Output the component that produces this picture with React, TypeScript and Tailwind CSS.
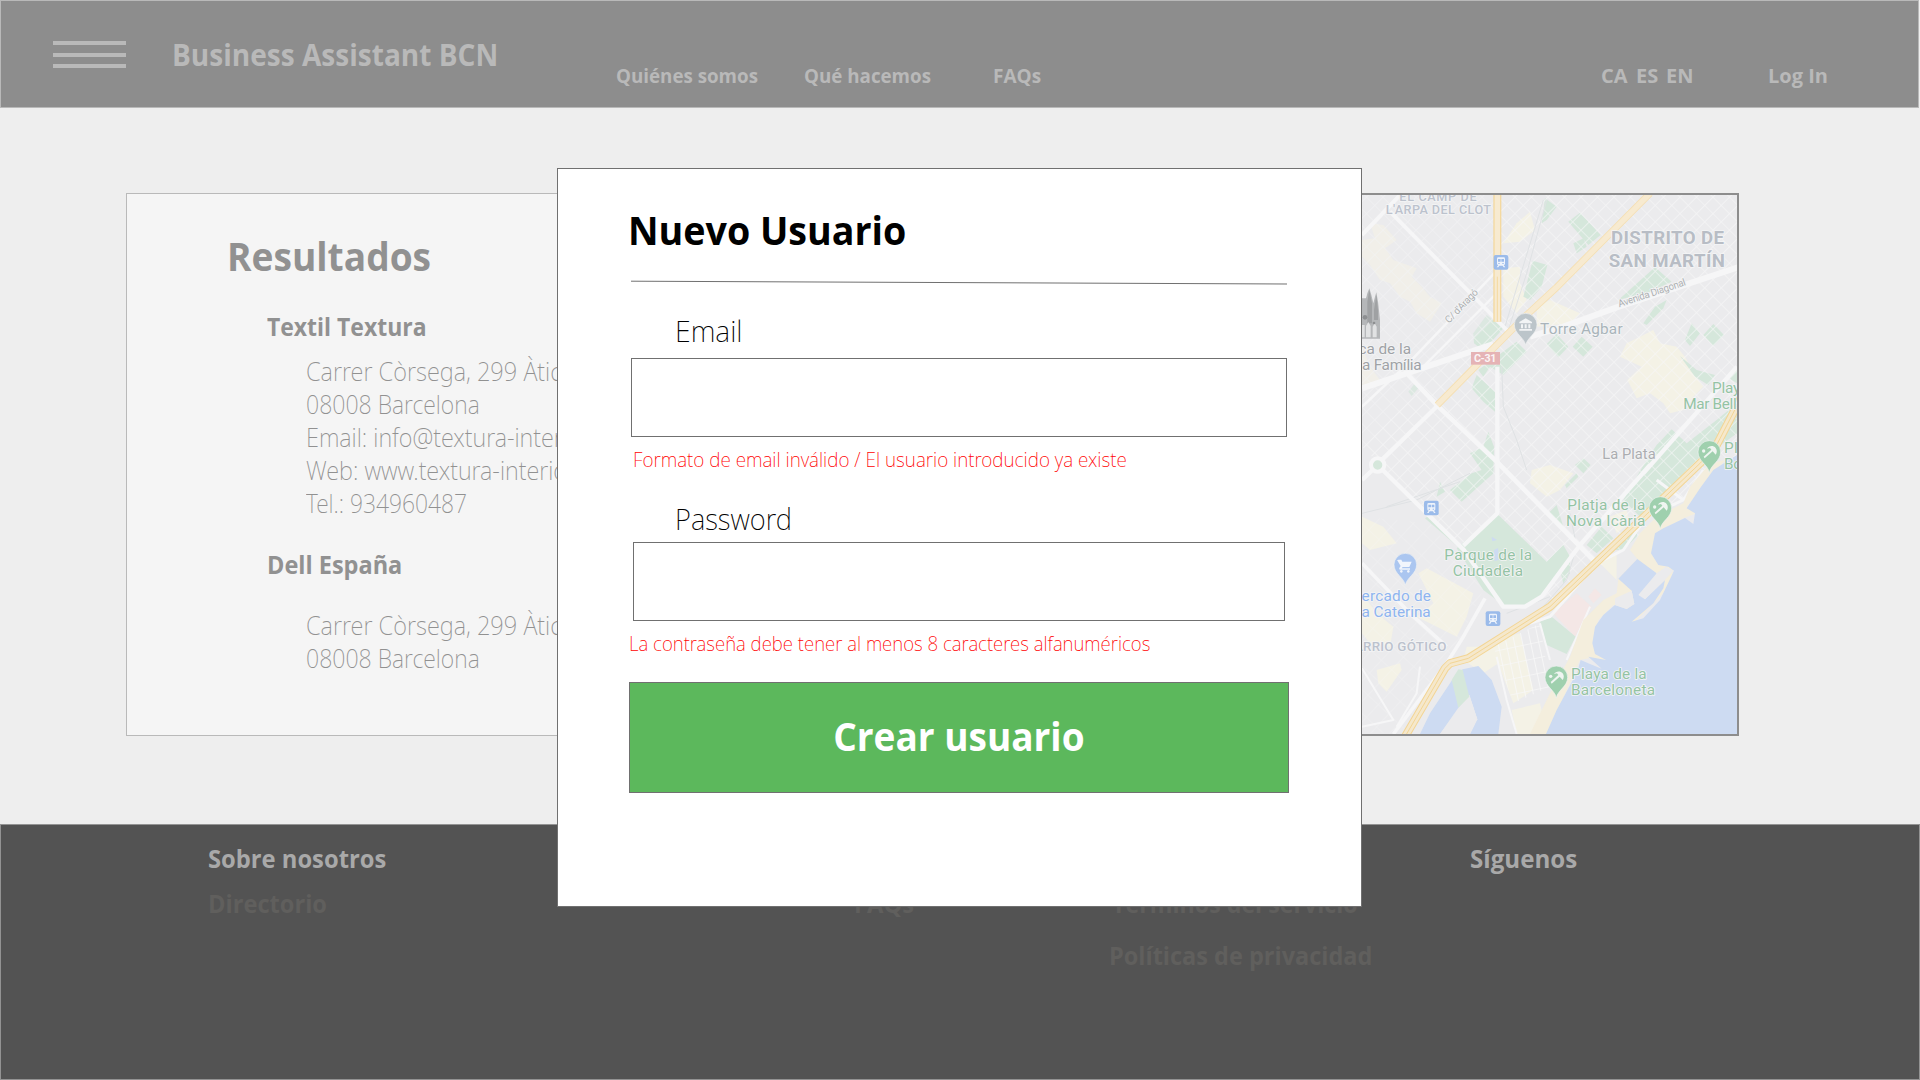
import type { ReactNode } from "react";

const bold = "font-['Open_Sans',sans-serif] font-bold whitespace-nowrap";
const light = "font-['Noto_Sans',sans-serif] font-extralight whitespace-nowrap";

function Header() {
  return (
    <header className={`${bold} flex h-[108px] w-[1919px] items-start border border-[#b9b9b9] bg-[#8d8d8d] text-xl leading-7 text-[#b9b9b9]`}>
      <button className="mt-10 ml-[52px] flex w-[73px] flex-col gap-[7.5px]" aria-label="Menú">
        <span className="h-1 w-full bg-[#b9b9b9]" />
        <span className="h-1 w-full bg-[#b9b9b9]" />
        <span className="h-1 w-full bg-[#b9b9b9]" />
      </button>
      <h1 className="mt-[34px] ml-[46px] w-[444px] origin-left scale-x-[0.935] text-[30px] leading-10">Business Assistant BCN</h1>
      <nav className="mt-[61px] flex flex-1">
        <a className="w-[188px] origin-left scale-x-[0.938]">Quiénes somos</a>
        <a className="w-[189px] origin-left scale-x-[0.938]">Qué hacemos</a>
        <a className="origin-left scale-x-95">FAQs</a>
      </nav>
      <div className="mt-[61px] flex w-[317px]">
        <a className="w-[35px]">CA</a>
        <a className="w-[30px]">ES</a>
        <a className="w-[102px]">EN</a>
        <a>Log In</a>
      </div>
    </header>
  );
}

function Results() {
  return (
    <section className="h-[543px] w-[874px] border border-[#b9b9b9] bg-[#f5f5f5] pt-[34px] pl-[100px] text-[25px] leading-[33px] text-[#919191]">
      <h2 className={`${bold} origin-left scale-x-[0.928] text-[40px] leading-14`}>Resultados</h2>
      <h3 className={`${bold} mt-[26px] ml-10 origin-left scale-x-[0.918]`}>Textil Textura</h3>
      <address className={`${light} mt-3 ml-[79px] not-italic`}>
        <p className="origin-left scale-x-[0.945]">Carrer Còrsega, 299 Àtico</p>
        <p className="origin-left scale-x-[0.922]">08008 Barcelona</p>
        <p className="origin-left scale-x-[0.94]">Email: info@textura-interiors.com</p>
        <p className="origin-left scale-x-[0.94]">Web: www.textura-interiors.com</p>
        <p className="origin-left scale-x-[0.913]">Tel.: 934960487</p>
      </address>
      <h3 className={`${bold} mt-7 ml-10 origin-left scale-x-94`}>Dell España</h3>
      <address className={`${light} mt-7 ml-[79px] not-italic`}>
        <p className="origin-left scale-x-[0.945]">Carrer Còrsega, 299 Àtico</p>
        <p className="origin-left scale-x-[0.922]">08008 Barcelona</p>
      </address>
    </section>
  );
}

function Pin({ x, y, color, children }: { x: number; y: number; color: string; children: ReactNode }) {
  return (
    <g transform={`translate(${x} ${y})`}>
      <path d="M0 62C-4 38-34 28-34 0a34 34 0 0 1 68 0C34 28 4 38 0 62Z" fill={color} stroke="#f0f1f2" strokeWidth="2" />
      {children}
    </g>
  );
}

function Beach({ x, y }: { x: number; y: number }) {
  return (
    <Pin x={x} y={y} color="#9fd0ae">
      <path d="M-7-10C-2-19 12-21 19-12C24-6 23 3 19 8L10-2L-14 19L-17 14L6-7L2-12Z" fill="#eff5f1" />
      <circle cx="-17" cy="-3" r="5" fill="#eff5f1" />
    </Pin>
  );
}

function Station({ x, y }: { x: number; y: number }) {
  return (
    <g transform={`translate(${x} ${y})`}>
      <rect x="-22" y="-22" width="44" height="44" rx="6" fill="#9bbbea" />
      <path d="M-12-11q0-4 4-4H8q4 0 4 4V4q0 4-4 4l5 7H8L5 10H-5l-3 5h-5l5-7q-4 0-4-4Z" fill="#eef3fb" />
      <path d="M-9-10h8v8h-8zM1-10h8v8H1zM-8 2h4v3h-4zM4 2h4v3H4z" fill="#9bbbea" />
    </g>
  );
}

function Label({ x, y, w, size = 46, color = "#9fa2a6", weight = 400, children }: { x: number; y: number; w: number; size?: number; color?: string; weight?: number; children: string }) {
  return (
    <text x={x} y={y} textLength={w} fontSize={size} fontWeight={weight} fill={color} stroke="#f4f5f6" strokeWidth="5" strokeLinejoin="round" paintOrder="stroke">
      {children}
    </text>
  );
}

const green = "#d5e7db";
const cream = "#f4f2e6";
const coastRoad = "M1175 650L1100 795L1050 850L600 1280L355 1435L300 1450L285 1465L165 1670";

function CityMap() {
  return (
    <section className="flex h-[543px] w-[739px] justify-end overflow-hidden border-2 border-[#8d8d8d] bg-[#ebebed]">
      <svg width="387" height="539" viewBox="0 45 1161 1617" className="shrink-0 font-[Roboto,sans-serif]">
        <defs>
          <pattern id="blocks" width="35" height="35" patternUnits="userSpaceOnUse" patternTransform="rotate(45)">
            <path d="M0 0H35M0 0V35" stroke="#f7f7f8" strokeWidth="5" />
          </pattern>
          <pattern id="wideBlocks" width="42" height="52" patternUnits="userSpaceOnUse" patternTransform="rotate(43)">
            <path d="M0 0H42M0 0V52" stroke="#f7f7f8" strokeWidth="5" />
          </pattern>
          <pattern id="lanes" width="24" height="46" patternUnits="userSpaceOnUse" patternTransform="rotate(-12)">
            <path d="M0 0H24M0 0V46" stroke="#f8f8f8" strokeWidth="5" />
          </pattern>
        </defs>
        <rect y="45" width="1161" height="1617" fill="#ebebed" />

        <g fill={cream}>
          <path d="M60 130L100 135L140 180L105 205L130 240L200 265L185 290L215 320L240 350L275 370L240 425L200 400L180 365L150 350L120 310L90 300L60 255L36 230V180L75 175Z" />
          <path d="M36 500L60 560L90 600L36 620Z" />
          <path d="M540 95L555 150L510 185L460 190L500 130Z" />
          <path d="M460 265L510 260L510 310L530 360L500 400L460 350Z" />
          <path d="M560 380L600 360L690 400L660 430L560 440Z" />
          <path d="M870 470L910 450L930 490L980 500L1005 530L1030 580L1060 620L1030 650L1000 690L960 700L940 670L900 640L860 655L832 600L875 560L810 530L830 490Z" />
          <path d="M545 870L600 855L670 880L630 930L590 950L540 910Z" />
          <path d="M36 1010L100 1040L140 1090L60 1110L36 1090Z" />
          <path d="M230 1165L370 1240L350 1310L320 1370L200 1310L250 1270L205 1180Z" />
          <path d="M36 1240L80 1300L130 1340L120 1400L60 1390L36 1360ZM80 1470L150 1450L155 1470L110 1535L85 1510Z" />
          <path d="M435 1380L510 1360L550 1530L490 1570L440 1440Z" />
          <path d="M485 1590L570 1570L590 1662H500Z" />
          <path d="M350 1400L440 1400L460 1440L400 1480L340 1440Z" />
          <path d="M780 1010L830 990L840 1030L800 1060ZM740 1140L800 1120L800 1200Z" />
        </g>
        <path d="M610 1300L680 1240L725 1280L675 1370ZM715 1250L735 1225L755 1245L730 1270Z" fill="#f4e7e6" />

        <g fill={green}>
          <path d="M585 55L620 80L590 120L575 130Z" />
          <path d="M655 125L690 98L752 165L715 195Z" />
          <path d="M670 190L700 175L710 200L680 220Z" />
          <path d="M548 242L592 255L575 320L540 360L520 350Z" />
          <path d="M805 360L915 262L965 305L900 335Z" />
          <path d="M880 430L915 380L950 360L940 385L905 420L890 435Z" />
          <path d="M370 460L410 405L460 445L400 512L372 490Z" />
          <path d="M385 570L500 485L530 515L460 585L420 560L400 590Z" />
          <path d="M590 492L620 462L655 500L625 532Z" />
          <path d="M668 500L695 470L728 500L700 530Z" />
          <path d="M1005 480L1025 430L1050 460L1020 498ZM1060 465L1090 432L1122 465L1090 498Z" />
          <path d="M990 528L1040 570L1095 585L1075 615L1035 590ZM1130 590L1161 570V610Z" />
          <path d="M365 625L380 585L435 635V695L400 665Z" />
          <path d="M175 635L195 610L205 625L185 648Z" />
          <path d="M360 820L400 800L415 755L432 800L430 880L335 965L300 930L365 880L395 870Z" />
          <path d="M260 950L270 905L285 935ZM645 915L680 880L685 890L650 925ZM675 855L700 835L722 855L700 880Z" />
          <path d="M890 840L920 795L965 748L1010 790L1100 720L1161 670V760L1010 870L930 960L870 1010L820 960L860 890Z" />
          <path d="M225 1015L240 1005L345 1105L335 1110Z" />
          <path d="M595 1000L620 975L640 1040L620 1035ZM710 1095L755 1040L790 1075L740 1120ZM630 1170L660 1130V1180L640 1210Z" />
          <path d="M790 1110L870 1020L860 1070L820 1110Z" />
          <path d="M570 1325L605 1310L677 1370L650 1422L590 1395Z" />
        </g>

        <path d="M0 40H1161V830L600 1280L440 1000L340 1100L36 800Z" fill="url(#blocks)" opacity=".75" />
        <path d="M0 45H430V420L36 800Z" fill="#ebebed" opacity=".35" />
        <path d="M440 1000L590 1145L640 1095L660 1130L630 1185L570 1250L525 1275H460L400 1230L320 1105Z" fill={green} />
        <path d="M36 1010L240 1030L400 1230L300 1440L150 1660H0Z" fill="url(#wideBlocks)" opacity=".3" />
        <path d="M430 1400L570 1330L600 1520L490 1570Z" fill="url(#lanes)" />
        <path d="M425 1070l16 10-14 4zM432 1110l12-6 2 35-12 5z" fill="#cddbf2" />

        <g fill="none" stroke="#dfe2e4" strokeWidth="3">
          <path d="M590 60L530 280L475 450M580 60L510 290L465 440M36 1000L200 960L360 880M110 980L330 905" />
          <path d="M455 560L460 680L500 780L530 870M660 1000L680 1100L650 1200L580 1280M470 1300L600 1250" />
        </g>

        <g fill="none" stroke="#f6f6f7" strokeLinejoin="round">
          <path d="M150 45L36 165M120 95L480 460" strokeWidth="12" />
          <path d="M450 262L180 545L36 680M440 340L220 560" strokeWidth="8" />
          <path d="M1175 258L800 382L640 440L540 470M430 492L230 560L36 625" strokeWidth="18" />
          <path d="M175 585L265 680L440 845L730 1140" strokeWidth="14" />
          <path d="M265 675L90 845" strokeWidth="13" />
          <path d="M442 560V1000L340 1097" strokeWidth="13" />
          <path d="M36 900L83 855L340 1108L460 1280H525L575 1250L690 1095L900 855M880 880L1161 560" strokeWidth="13" />
          <path d="M36 1150L180 1300L290 1400M405 1255L340 1370L290 1450L130 1662" strokeWidth="11" />
          <path d="M440 1430L470 1560L500 1662M570 1330L600 1440M720 1280L650 1440M36 1465L130 1620L36 1640M140 1640L200 1540L210 1460" strokeWidth="6" />
          <path d="M1060 870L1000 960L890 1010L820 1110L740 1150L600 1310L540 1330M1000 960L920 900" strokeWidth="9" />
        </g>
        <circle cx="83" cy="855" r="20" fill={green} stroke="#f6f6f7" strokeWidth="12" />

        <path d="M1125 840L1060 920L1010 980L1040 1000L1000 1015L950 1045L925 1060L905 1120L970 1170L955 1225L850 1330L840 1325L930 1220L920 1180L855 1245L850 1275L830 1287L790 1275L745 1320L730 1390L770 1440L715 1435L690 1440L620 1600L590 1662H540L600 1540L660 1430L700 1320L760 1260L800 1240L805 1196L862 1137L840 1110L870 1060L920 1010L1000 970L1020 920L1080 850Z" fill="#f4eedd" />
        <path d="M1161 825V1662H588L620 1590L682 1475L692 1440L720 1452L755 1466L715 1430L768 1440L735 1422L727 1390L735 1340L760 1305L795 1275L830 1287L853 1272L845 1232L805 1196L862 1137L920 1180L865 1245L885 1258L945 1200L940 1225L910 1270L845 1325L880 1315L930 1260L972 1172L955 1160L925 1155L903 1120L915 1060L940 1045L1005 1014L1030 1032L1035 1000L1010 985L1050 925L1090 870Z" fill="#cddbf2" />
        <path d="M795 1255L845 1232L853 1272L830 1287L795 1275ZM920 1180L948 1160L970 1172L945 1200L885 1258L868 1243L905 1205Z" fill="#ebebed" />
        <path d="M338 1468L385 1458L425 1500L455 1580L445 1662H360L382 1618L358 1545L325 1590L270 1662H210L240 1600L320 1480Z" fill="#cddbf2" />
        <path d="M325 1583L358 1545L382 1618L360 1662H270Z" fill="#ebebed" />
        <path d="M305 1500L325 1468L338 1470L358 1550L325 1583Z" fill={green} />

        <g fill="none" strokeLinejoin="round">
          <path d="M442 40V425" stroke="#f4d9a0" strokeWidth="24" />
          <path d="M442 40V425" stroke="#f7ead0" strokeWidth="16" />
          <path d="M442 290V425" stroke="#f4d9a0" strokeWidth="3" />
          <path d="M900 40L620 322L530 405L430 505L262 675" stroke="#f5dfb2" strokeWidth="21" />
          <path d="M900 40L620 322L530 405L430 505L262 675" stroke="#f7ead0" strokeWidth="16" />
          <path d={coastRoad} stroke="#f3d594" strokeWidth="25" />
          <path d={coastRoad} stroke="#f5e8cc" strokeWidth="19" />
          <path d={coastRoad} stroke="#f3d594" strokeWidth="3" />
        </g>

        <path d="M0 355H48L52 340L58 325L64 345L70 370L75 350L79 337L84 365L90 420V476H0Z" fill="#b5b7b9" />
        <path d="M52 365L58 330L66 370V430H52ZM72 390L79 345L84 390V420H72Z" fill="#9fa1a3" />
        <path d="M36 435h8v37h-8zM48 472V438l7-12 7 12v34zM68 472v-32l6-10 6 10v32z" fill="#e1e2e3" />
        <circle cx="45" cy="412" r="7" fill="#8d8f91" />
        <circle cx="72" cy="429" r="4" fill="#8d8f91" />

        <Station x={453} y={247} />
        <Station x={244} y={984} />
        <Station x={429} y={1316} />
        <Pin x={527} y={434} color="#bcc5ca">
          <path d="M-19-8L0-19L19-8V-4H-19ZM-14-1h6v12h-6zM-3-1h6v12h-6zM8-1h6v12H8zM-19 13h38v5h-38z" fill="#f2f4f5" />
        </Pin>
        <Pin x={166} y={1154} color="#abc6f0">
          <path d="M-21-15h9l3 6h28L12 7H-8l-3 4h25v4h-30q-4-1-2-5l4-6-9-15h-3zM-12 16a4 4 0 1 0 .1 0M9 16a4 4 0 1 0 .1 0" fill="#f1f5fc" />
        </Pin>
        <Beach x={1078} y={816} />
        <Beach x={931} y={984} />
        <Beach x={619} y={1492} />

        <rect x="363" y="516" width="87" height="38" fill="#e5b3b5" />
        <text x="372" y="546" textLength="67" fontSize="32" fontWeight="700" fill="#fbf5f5">C-31</text>

        <Label x={148} y={63} w={232} size={38} weight={500} color="#bcc2cd">EL CAMP DE</Label>
        <Label x={107} y={102} w={316} size={38} weight={500} color="#bcc2cd">L'ARPA DEL CLOT</Label>
        <Label x={783} y={192} w={339} size={56} weight={700} color="#b8bdc5">DISTRITO DE</Label>
        <Label x={776} y={261} w={349} size={56} weight={700} color="#b8bdc5">SAN MARTÍN</Label>
        <g transform="translate(297 431) rotate(-46)"><Label x={0} y={0} w={128} size={30} color="#adafb1">C/ d'Aragó</Label></g>
        <g transform="translate(808 382) rotate(-18.5)"><Label x={0} y={0} w={212} size={30} color="#adafb1">Avenida Diagonal</Label></g>
        <Label x={570} y={462} w={248} color="#a9b4ba">Torre Agbar</Label>
        <Label x={-85} y={521} w={268}>Basílica de la</Label>
        <Label x={-103} y={569} w={318}>Sagrada Família</Label>
        <Label x={757} y={838} w={160} size={44} color="#abadb0">La Plata</Label>
        <Label x={1086} y={639} w={168} color="#94c3a4">Playa de</Label>
        <Label x={1000} y={687} w={184} color="#94c3a4">Mar Bella</Label>
        <Label x={1122} y={819} w={122} color="#94c3a4">Platja</Label>
        <Label x={1122} y={868} w={160} color="#94c3a4">Bogatell</Label>
        <Label x={652} y={990} w={234} color="#94c3a4">Platja de la</Label>
        <Label x={648} y={1038} w={238} color="#94c3a4">Nova Icària</Label>
        <Label x={283} y={1140} w={263} color="#94c3a4">Parque de la</Label>
        <Label x={308} y={1188} w={211} color="#94c3a4">Ciudadela</Label>
        <Label x={-6} y={1263} w={249} color="#8eb4ef">Mercado de</Label>
        <Label x={-58} y={1311} w={300} color="#8eb4ef">Santa Caterina</Label>
        <Label x={-14} y={1413} w={303} size={40} weight={500} color="#bcc2cd">BARRIO GÓTICO</Label>
        <Label x={663} y={1496} w={227} color="#94c3a4">Playa de la</Label>
        <Label x={663} y={1545} w={252} color="#94c3a4">Barceloneta</Label>
      </svg>
    </section>
  );
}

function Footer() {
  return (
    <footer className={`${bold} flex h-64 items-start border border-[#939393] bg-[#535353] pt-[17px] pl-[207px] text-[25px] leading-[33px] text-[#605f5d]`}>
      <div className="w-[646px]">
        <h4 className="origin-left scale-x-95 text-[#a9a9a9]">Sobre nosotros</h4>
        <p className="mt-3 origin-left scale-x-[0.945]">Directorio</p>
      </div>
      <p className="mt-[45px] w-[255px] origin-left scale-x-95">FAQs</p>
      <div className="mt-[45px] w-[361px]">
        <p className="ml-[3px] origin-left scale-x-[0.928]">Términos del servicio</p>
        <p className="mt-[19px] origin-left scale-x-94">Políticas de privacidad</p>
      </div>
      <h4 className="origin-left scale-x-[0.965] text-[#a9a9a9]">Síguenos</h4>
    </footer>
  );
}

function NewUserModal() {
  return (
    <div role="dialog" className="absolute top-[168px] left-[557px] flex h-[739px] w-[805px] flex-col items-start border border-[#707070] bg-white text-black">
      <h2 className={`${bold} mt-[33px] ml-[70px] origin-left scale-x-94 text-[40px] leading-14`}>Nuevo Usuario</h2>
      <svg width="656" height="6" className="mt-[22px] ml-[73px]">
        <path d="M0 1.2L656 4" stroke="#707070" />
      </svg>
      <label className={`${light} mt-[25px] ml-[117px] origin-left scale-x-[0.947] text-[30px] leading-10`}>Email</label>
      <input className="mt-[7px] ml-[73px] h-[79px] w-[656px] border border-[#707070]" />
      <p className={`${light} mt-[9px] ml-[75px] origin-left scale-x-[0.948] text-xl leading-7 text-[#ff0000]`}>Formato de email inválido / El usuario introducido ya existe</p>
      <label className={`${light} mt-[25px] ml-[117px] origin-left scale-x-[0.913] text-[30px] leading-10`}>Password</label>
      <input className="mt-[3px] ml-[75px] h-[79px] w-[652px] border border-[#707070]" />
      <p className={`${light} mt-[9px] ml-[71px] origin-left scale-x-[0.934] text-xl leading-7 text-[#ff0000]`}>La contraseña debe tener al menos 8 caracteres alfanuméricos</p>
      <button className={`${bold} mt-6 ml-[71px] h-[111px] w-[660px] border border-[#707070] bg-[#5cb85c] pb-1 text-[40px] leading-14 text-white`}>
        <span className="inline-block scale-x-[0.925]">Crear usuario</span>
      </button>
    </div>
  );
}

export default function App() {
  return (
    <div className="relative flex h-[1080px] w-[1920px] flex-col overflow-hidden bg-[#eeeeee]">
      <Header />
      <main className="flex h-[716px] pt-[85px] pl-[126px]">
        <Results />
        <CityMap />
      </main>
      <Footer />
      <NewUserModal />
    </div>
  );
}
